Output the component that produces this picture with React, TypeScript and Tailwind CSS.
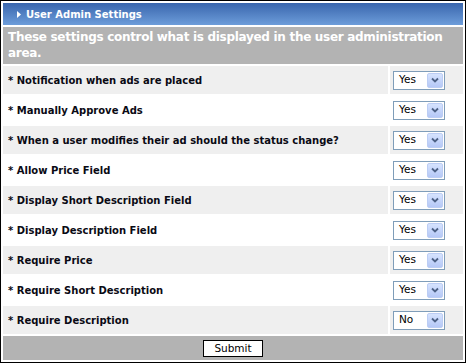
import React from "react";

const rows = [
  { label: "Notification when ads are placed", value: "Yes" },
  { label: "Manually Approve Ads", value: "Yes" },
  { label: "When a user modifies their ad should the status change?", value: "Yes" },
  { label: "Allow Price Field", value: "Yes" },
  { label: "Display Short Description Field", value: "Yes" },
  { label: "Display Description Field", value: "Yes" },
  { label: "Require Price", value: "Yes" },
  { label: "Require Short Description", value: "Yes" },
  { label: "Require Description", value: "No" },
];

function Select({ value }: { value: string }) {
  return (
    <div className="flex h-[19px] w-[52px] items-stretch border border-[#7f9db9] bg-white p-[1px]">
      <span className="flex flex-1 items-center pl-[4px] text-[10.5px] text-black">{value}</span>
      <span className="flex w-[16px] items-center justify-center rounded-[2px] border border-[#bccdf4] bg-gradient-to-b from-[#d6e3fe] to-[#b5c8f6]">
        <svg width="8" height="6" viewBox="0 0 8 6">
          <path d="M1 1.5 L4 4.5 L7 1.5" fill="none" stroke="#4d6185" strokeWidth="1.8" />
        </svg>
      </span>
    </div>
  );
}

export default function App() {
  return (
    <div
      className="flex h-[363px] w-[466px] flex-col gap-[2px] border border-black bg-white p-[2px]"
      style={{ fontFamily: '"DejaVu Sans", Verdana, sans-serif' }}
    >
      <div className="flex h-[22px] items-center gap-[5px] bg-gradient-to-b from-[#3a66ad] to-[#6d9dda] pl-[14px] text-[10px] font-bold text-white">
        <svg width="4" height="7" viewBox="0 0 4 7">
          <path d="M0 0 L4 3.5 L0 7 Z" fill="#ffffff" />
        </svg>
        <span>User Admin Settings</span>
      </div>
      <div className="h-[37px] bg-[#b3b3b3] px-[5px] pt-[2px] text-[12px] leading-[16px] font-bold tracking-[-0.3px] text-white">
        These settings control what is displayed in the user administration area.
      </div>
      {rows.map((r, i) => (
        <div key={r.label} className="flex h-[28px] gap-[2px]">
          <div
            className={`flex flex-1 items-center pl-[5px] text-[10px] font-bold text-[#0a0a14] ${
              i % 2 === 0 ? "bg-[#efefef]" : "bg-white"
            }`}
          >
            * {r.label}
          </div>
          <div
            className={`flex w-[73px] items-center pl-[3px] ${
              i % 2 === 0 ? "bg-[#efefef]" : "bg-white"
            }`}
          >
            <Select value={r.value} />
          </div>
        </div>
      ))}
      <div className="flex h-[24px] items-center justify-center bg-[#b3b3b3]">
        <button className="h-[17px] w-[60px] border border-black bg-white text-[10.5px] leading-none text-black">
          Submit
        </button>
      </div>
    </div>
  );
}
